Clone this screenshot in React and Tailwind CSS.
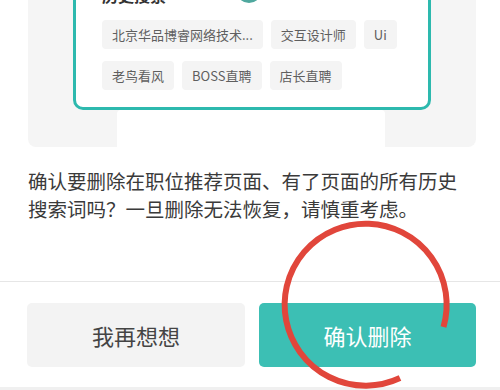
export default function App() {
  const row1 = ["北京华品博睿网络技术...", "交互设计师", "Ui"];
  const row2 = ["老鸟看风", "BOSS直聘", "店长直聘"];
  const Tag = ({ t }) => (
    <div className="h-[29px] px-[10px] flex items-center bg-[#f4f4f4] rounded-[4px] text-[13px] text-[#5f5f5f] leading-none">
      {t}
    </div>
  );
  return (
    <div className="relative w-[500px] h-[390px] overflow-hidden bg-white font-['Noto_Sans_CJK_SC',sans-serif] flex flex-col">
      {/* top preview panel */}
      <div className="ml-[28px] mr-[24px] h-[147px] bg-[#f5f5f5] rounded-b-[8px] flex flex-col overflow-hidden shrink-0">
        <div className="mx-[45px] -mt-[36px] border-[3px] border-[#2db9ae] rounded-[10px] bg-white pt-[16px] pb-[17px] pl-[26px] pr-[20px]">
          <div className="h-[24px] flex items-center">
            <span className="text-[16px] font-bold text-[#333] leading-none">历史搜索</span>
            <span className="ml-[70px] mb-[11px] w-[26px] h-[26px] rounded-full border-[3px] border-[#4fa89e] bg-[#e8f6f4]"></span>
          </div>
          <div className="mt-[13px] flex flex-col gap-[12px]">
            <div className="flex gap-[8px]">
              {row1.map((t) => <Tag key={t} t={t} />)}
            </div>
            <div className="flex gap-[8px]">
              {row2.map((t) => <Tag key={t} t={t} />)}
            </div>
          </div>
        </div>
        <div className="flex-1 flex">
          <div className="w-[89px]"></div>
          <div className="w-[268px] bg-white rounded-t-[4px]"></div>
          <div className="flex-1"></div>
        </div>
      </div>

      {/* message */}
      <p className="mt-[20px] px-[28px] text-[19.5px] leading-[28px] text-[#3a3a3a] h-[56px]">
        确认要删除在职位推荐页面、有了页面的所有历史搜索词吗？一旦删除无法恢复，请慎重考虑。
      </p>

      <div className="mt-[58px] h-px bg-[#e6e6e6] shrink-0"></div>

      <div className="mt-[21px] pl-[27px] pr-[24px] flex gap-[14px] shrink-0">
        <button className="w-[218px] h-[64px] rounded-[5px] bg-[#f3f3f3] text-[22px] text-[#444] flex items-center justify-center">
          我再想想
        </button>
        <button className="flex-1 h-[64px] rounded-[5px] bg-[#3cbfb4] text-[22px] text-white flex items-center justify-center">
          确认删除
        </button>
      </div>

      <div className="mt-auto h-[3px] bg-[#f0f0f0] shrink-0"></div>

      {/* hand-drawn red annotation circle */}
      <svg className="absolute inset-0 pointer-events-none" width="500" height="390" viewBox="0 0 500 390">
        <path d="M 443.5 327 A 81 81 0 1 0 400 378" fill="none" stroke="#e1463b" strokeWidth="6" />
      </svg>
    </div>
  );
}
